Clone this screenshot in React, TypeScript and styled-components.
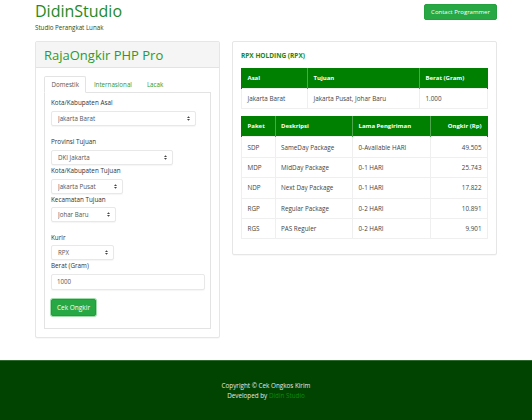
import { FC } from 'react'
import styled, { createGlobalStyle } from 'styled-components'

const GlobalStyle = createGlobalStyle`
  html, body {
    margin: 0;
    padding: 0;
    background: #fff;
  }
  body {
    font-family: 'Open Sans', 'Noto Sans', sans-serif;
    font-size: 6.5px;
    color: #333;
  }
  * {
    box-sizing: border-box;
  }
`

const costs = [
  { code: 'SDP', desc: 'SameDay Package', etd: '0-Available HARI', price: '49.505' },
  { code: 'MDP', desc: 'MidDay Package', etd: '0-1 HARI', price: '25.743' },
  { code: 'NDP', desc: 'Next Day Package', etd: '0-1 HARI', price: '17.822' },
  { code: 'RGP', desc: 'Regular Package', etd: '0-2 HARI', price: '10.891' },
  { code: 'RGS', desc: 'PAS Reguler', etd: '0-2 HARI', price: '9.901' }
]

const fields = [
  { label: 'Kota/Kabupaten Asal', value: 'Jakarta Barat', width: 145, after: 11.4 },
  { label: 'Provinsi Tujuan', value: 'DKI Jakarta', width: 121.6, after: 1.4 },
  { label: 'Kota/Kabupaten Tujuan', value: 'Jakarta Pusat', width: 72, after: 1 },
  { label: 'Kecamatan Tujuan', value: 'Johar Baru', width: 65, after: 10.4 },
  { label: 'Kurir', value: 'RPX', width: 63, after: 1.3 }
]

const SelectArrow: FC = () => (
  <Arrow viewBox="0 0 4 6" width="3" height="5">
    <path d="M2 0 L4 2.4 L0 2.4 Z M2 6 L4 3.6 L0 3.6 Z" fill="#444" />
  </Arrow>
)

const App: FC = () => {
  return (
    <>
      <GlobalStyle />
      <Container>
        <Header>
          <Brand>
            <BrandTitle>DidinStudio</BrandTitle>
            <BrandSub>Studio Perangkat Lunak</BrandSub>
          </Brand>
          <ContactButton>Contact Programmer</ContactButton>
        </Header>

        <Row>
          <FormPanel>
            <PanelHeading>
              <PanelTitle>RajaOngkir PHP Pro</PanelTitle>
            </PanelHeading>
            <PanelBody>
              <Tabs>
                <Tab $active>Domestik</Tab>
                <Tab>Internasional</Tab>
                <Tab>Lacak</Tab>
              </Tabs>
              <TabContent>
                {fields.map((f) => (
                  <Field key={f.label} $after={f.after}>
                    <Label>{f.label}</Label>
                    <SelectWrap $width={f.width}>
                      <Select defaultValue={f.value}>
                        <option>{f.value}</option>
                      </Select>
                      <SelectArrow />
                    </SelectWrap>
                  </Field>
                ))}
                <Field $after={9.3}>
                  <Label>Berat (Gram)</Label>
                  <Input defaultValue="1000" />
                </Field>
                <SubmitButton>Cek Ongkir</SubmitButton>
              </TabContent>
            </PanelBody>
          </FormPanel>

          <ResultPanel>
            <ResultTitle>RPX HOLDING (RPX)</ResultTitle>
            <Table>
              <colgroup>
                <col style={{ width: 66 }} />
                <col style={{ width: 112 }} />
                <col />
              </colgroup>
              <thead>
                <tr>
                  <Th>Asal</Th>
                  <Th>Tujuan</Th>
                  <Th>Berat (Gram)</Th>
                </tr>
              </thead>
              <tbody>
                <tr>
                  <Td>Jakarta Barat</Td>
                  <Td>Jakarta Pusat, Johar Baru</Td>
                  <Td>1.000</Td>
                </tr>
              </tbody>
            </Table>

            <Table>
              <colgroup>
                <col style={{ width: 33.5 }} />
                <col style={{ width: 77.5 }} />
                <col style={{ width: 78 }} />
                <col />
              </colgroup>
              <thead>
                <tr>
                  <Th>Paket</Th>
                  <Th>Deskripsi</Th>
                  <Th>Lama Pengiriman</Th>
                  <Th $right>Ongkir (Rp)</Th>
                </tr>
              </thead>
              <tbody>
                {costs.map((c) => (
                  <tr key={c.code}>
                    <Td>{c.code}</Td>
                    <Td>{c.desc}</Td>
                    <Td>{c.etd}</Td>
                    <Td $right>{c.price}</Td>
                  </tr>
                ))}
              </tbody>
            </Table>
          </ResultPanel>
        </Row>
      </Container>

      <Footer>
        <FooterLine>Copyright © Cek Ongkos Kirim</FooterLine>
        <FooterLine>
          Developed by <FooterLink>Didin Studio</FooterLink>
        </FooterLine>
      </Footer>
    </>
  )
}

const Container = styled.div`
  width: 462px;
  margin: 0 auto;
`

const Header = styled.div`
  display: flex;
  justify-content: space-between;
  align-items: flex-start;
  height: 41px;
`

const Brand = styled.div`
  display: flex;
  flex-direction: column;
`

const BrandTitle = styled.div`
  font-size: 16px;
  line-height: 22px;
  color: #238a23;
`

const BrandSub = styled.div`
  font-size: 6.2px;
  line-height: 9px;
  margin-top: 1px;
  color: #1c4f1c;
`

const ContactButton = styled.button`
  margin-top: 4px;
  width: 73px;
  height: 16px;
  padding: 0;
  border: 1px solid #25a03f;
  border-radius: 2px;
  background: #28a745;
  color: #fff;
  font-family: inherit;
  font-size: 6px;
`

const Row = styled.div`
  display: flex;
  align-items: flex-start;
  gap: 12px;
`

const FormPanel = styled.div`
  width: 185px;
  border: 1px solid #e6e6e6;
  border-radius: 2px;
  box-shadow: 0 1px 1px rgba(0, 0, 0, 0.03);
  background: #fff;
`

const PanelHeading = styled.div`
  height: 26px;
  background: #f5f5f5;
  border-bottom: 1px solid #e3e3e3;
  padding: 0 8px;
  display: flex;
  align-items: center;
`

const PanelTitle = styled.div`
  font-size: 13px;
  line-height: 18px;
  color: #2a9a2e;
`

const PanelBody = styled.div`
  padding: 8px;
`

const Tabs = styled.div`
  display: flex;
  border-bottom: 1px solid #e3e3e3;
  height: 17px;
`

const Tab = styled.div<{ $active?: boolean }>`
  padding: 0 6.5px;
  line-height: 16px;
  font-size: 6.2px;
  border: 1px solid ${(p) => (p.$active ? '#e3e3e3' : 'transparent')};
  border-bottom-color: ${(p) => (p.$active ? '#fff' : 'transparent')};
  border-radius: 2px 2px 0 0;
  background: ${(p) => (p.$active ? '#fff' : 'transparent')};
  color: ${(p) => (p.$active ? '#555' : '#2a9a2e')};
  height: 17px;
`

const TabContent = styled.div`
  border: 1px solid #e3e3e3;
  border-top: none;
  padding: 5px 6px 12px 6px;
`

const Field = styled.div<{ $after: number }>`
  margin-bottom: ${(p) => p.$after}px;
`

const Label = styled.div`
  line-height: 10px;
  font-size: 6.3px;
  color: #333;
  margin-bottom: 2.6px;
`

const SelectWrap = styled.div<{ $width: number }>`
  position: relative;
  width: ${(p) => p.$width}px;
  height: 15px;
`

const Select = styled.select`
  appearance: none;
  width: 100%;
  height: 100%;
  padding: 0 0 0 6px;
  border: 1px solid #e8e8e8;
  border-radius: 2px;
  background: #fff;
  box-shadow: 0 1px 1px rgba(0, 0, 0, 0.04);
  font-family: inherit;
  font-size: 6.2px;
  color: #555;
  outline: none;
`

const Arrow = styled.svg`
  position: absolute;
  right: 6px;
  top: 5px;
  pointer-events: none;
`

const Input = styled.input`
  display: block;
  width: 154px;
  height: 15.7px;
  padding: 0 5px;
  border: 1px solid #e8e8e8;
  border-radius: 2px;
  box-shadow: 0 1px 1px rgba(0, 0, 0, 0.04);
  font-family: inherit;
  font-size: 6.2px;
  color: #555;
  outline: none;
`

const SubmitButton = styled.button`
  display: block;
  width: 45px;
  height: 17px;
  padding: 0;
  border: 1px solid #24993d;
  border-radius: 2px;
  background: #28a745;
  box-shadow: 0 0 0 1px #9fdcaa;
  color: #fff;
  font-family: inherit;
  font-size: 6.5px;
`

const ResultPanel = styled.div`
  width: 265px;
  border: 1px solid #e6e6e6;
  border-radius: 2px;
  box-shadow: 0 1px 1px rgba(0, 0, 0, 0.03);
  background: #fff;
  padding: 9px 8px 15px 8px;
`

const ResultTitle = styled.div`
  font-size: 6.5px;
  font-weight: 700;
  line-height: 10px;
  color: #138a13;
  margin-bottom: 7px;
`

const Table = styled.table`
  width: 247px;
  border-collapse: collapse;
  table-layout: fixed;
  margin-bottom: 7px;

  &:last-child {
    margin-bottom: 0;
  }
`

const Th = styled.th<{ $right?: boolean }>`
  height: 20.5px;
  padding: 0 5.5px;
  background: #008000;
  color: #fff;
  font-size: 6px;
  font-weight: 700;
  text-align: ${(p) => (p.$right ? 'right' : 'left')};
  border-left: 1px solid rgba(255, 255, 255, 0.3);
  border-right: 1px solid rgba(255, 255, 255, 0.3);

  &:first-child {
    border-left: 1px solid #008000;
  }
  &:last-child {
    border-right: 1px solid #008000;
  }
`

const Td = styled.td<{ $right?: boolean }>`
  height: 20.4px;
  padding: 0 5.5px;
  font-size: 6.3px;
  color: #444;
  text-align: ${(p) => (p.$right ? 'right' : 'left')};
  border: 1px solid #efefef;
  white-space: nowrap;
`

const Footer = styled.div`
  margin-top: 22px;
  height: 60px;
  background: #014401;
  border-top: 1px solid #2f6a2f;
  padding-top: 20px;
  text-align: center;
`

const FooterLine = styled.div`
  font-size: 6.3px;
  line-height: 10px;
  color: #e8e8e8;
`

const FooterLink = styled.span`
  color: #0a8a0a;
`

export default App
